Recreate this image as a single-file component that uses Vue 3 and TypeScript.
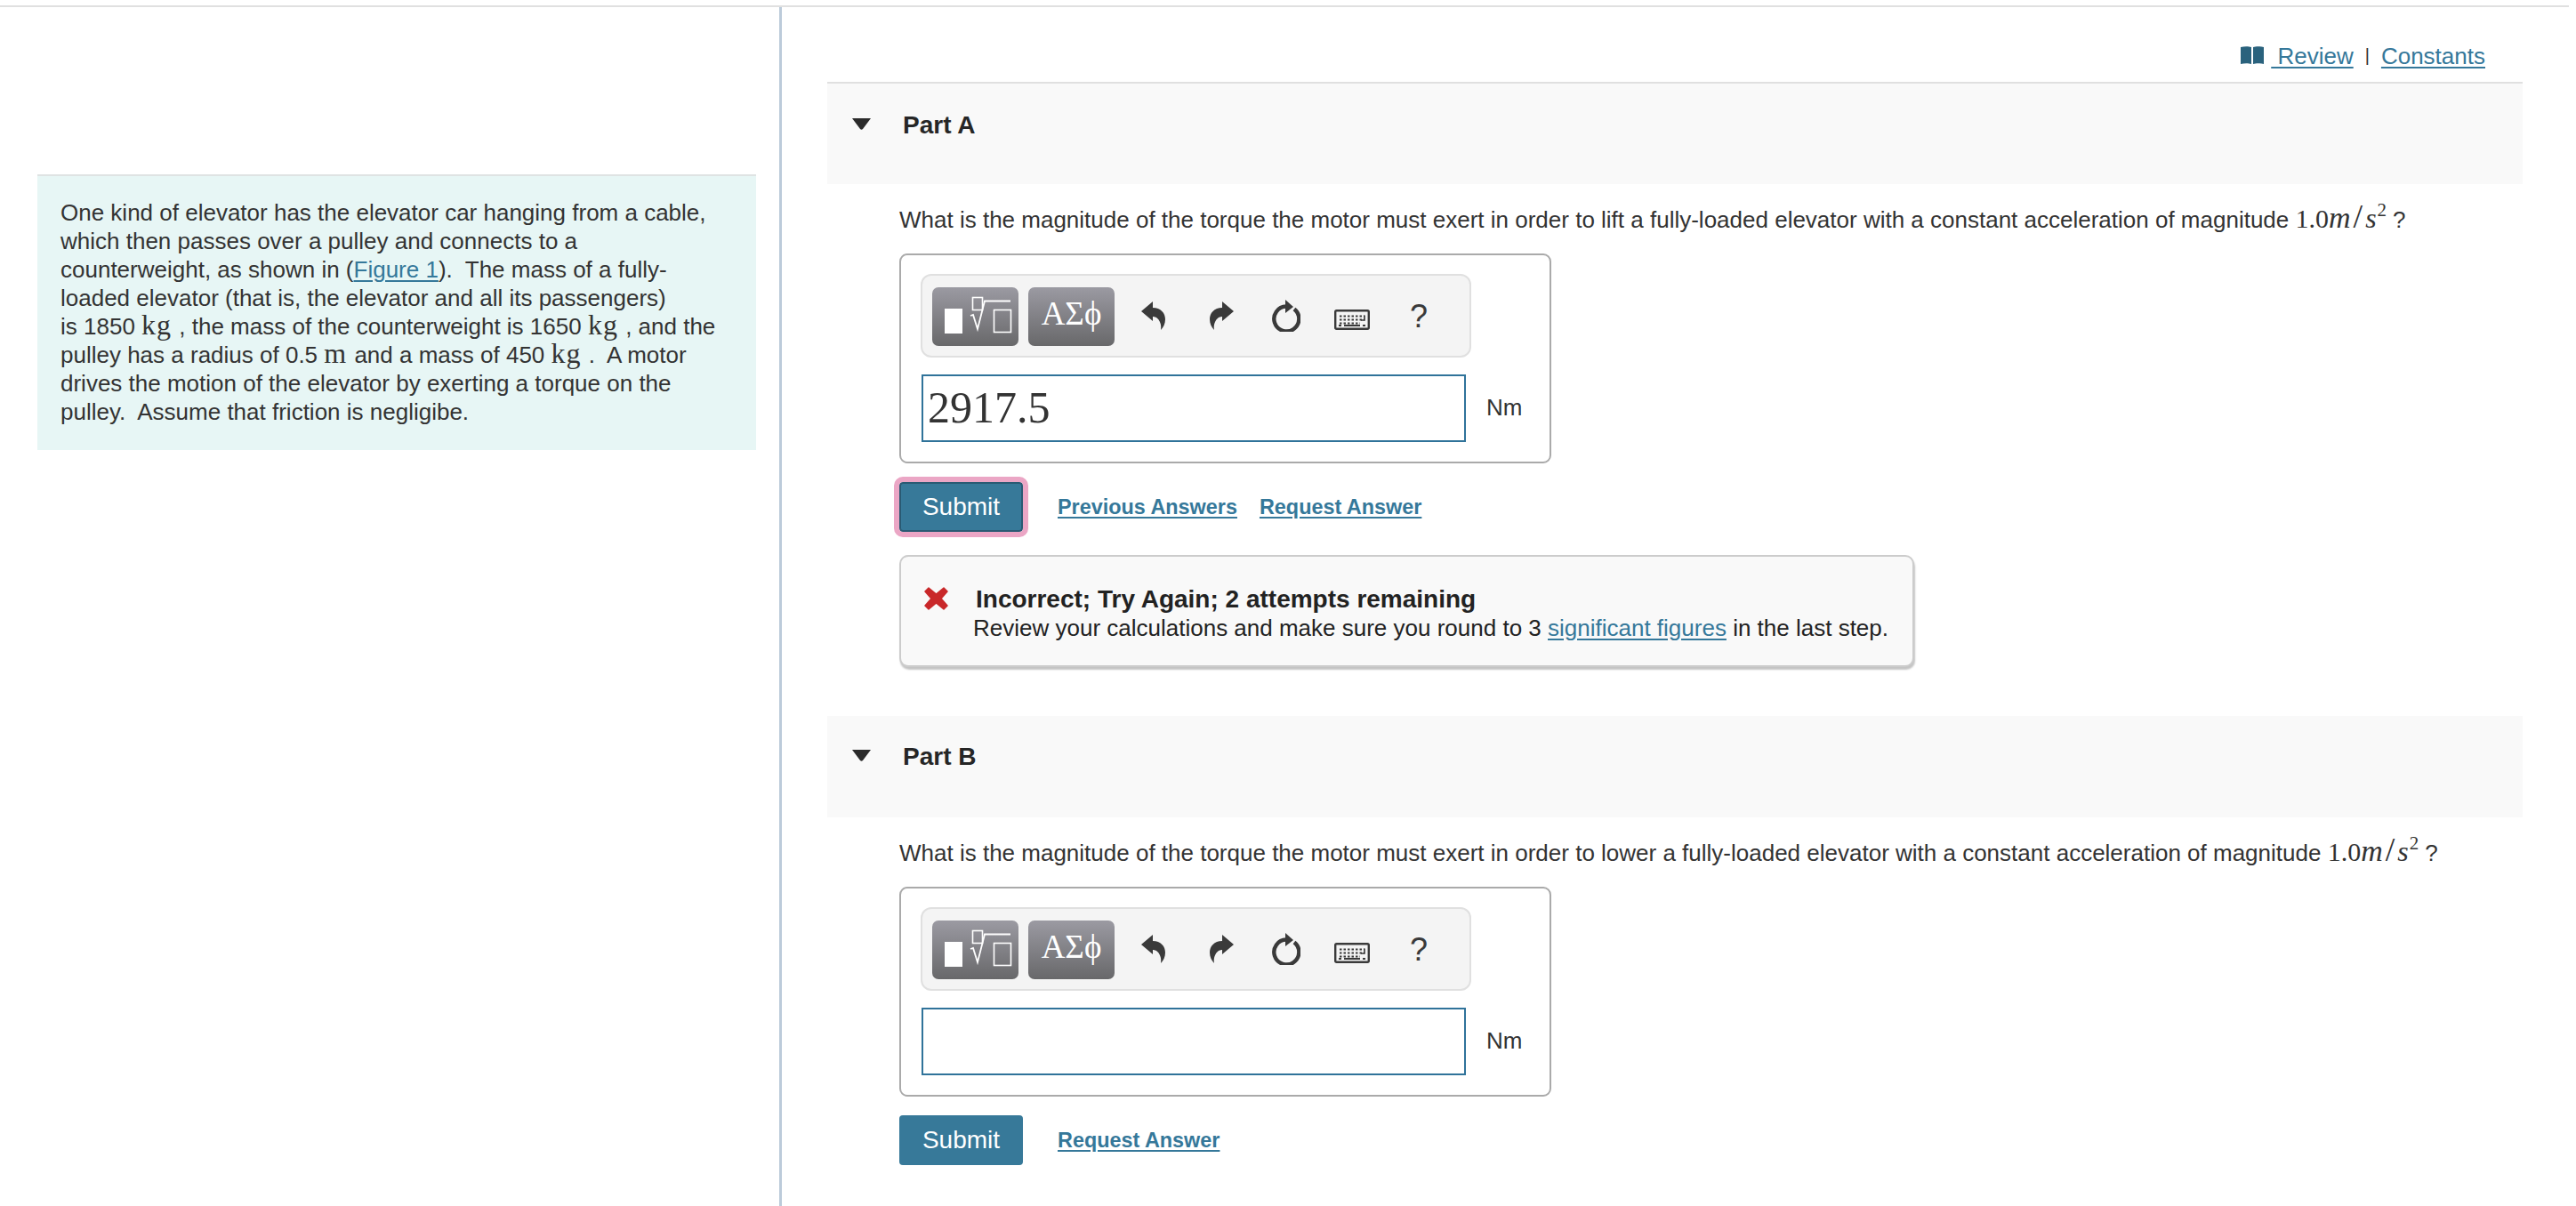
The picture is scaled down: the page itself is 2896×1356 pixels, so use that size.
<script setup lang="ts">
interface Part {
  id: string
  verb: string
  value: string
  focused: boolean
  previous: boolean
  feedback: boolean
}
const parts: Part[] = [
  { id: 'Part A', verb: 'lift', value: '2917.5', focused: true, previous: true, feedback: true },
  { id: 'Part B', verb: 'lower', value: '', focused: false, previous: false, feedback: false },
]
const keyRows = [
  { y: 7.5, dash: '2.5 2', x1: 6, x2: 34 },
  { y: 11.5, dash: '2.5 2', x1: 6, x2: 34 },
  { y: 15.5, dash: '2.5 2', x1: 6, x2: 29 },
]
</script>

<template>
  <div class="page">
    <div class="columns">
      <aside class="left">
        <div class="intro">
          One kind of elevator has the elevator car hanging from a cable,<br />
          which then passes over a pulley and connects to a<br />
          counterweight, as shown in (<a class="link">Figure 1</a>).&nbsp; The mass of a fully-<br />
          loaded elevator (that is, the elevator and all its passengers)<br />
          is 1850 <span class="unit">kg</span> , the mass of the counterweight is 1650 <span class="unit">kg</span> , and the<br />
          pulley has a radius of 0.5 <span class="unit">m</span> and a mass of 450 <span class="unit">kg</span> .&nbsp; A motor<br />
          drives the motion of the elevator by exerting a torque on the<br />
          pulley.&nbsp; Assume that friction is negligibe.
        </div>
      </aside>

      <main class="right">
        <div class="toplinks">
          <svg class="book" width="26" height="20" viewBox="0 0 26 20">
            <path d="M0 1 C4 0 9 0 12 1 V20 C9 19 4 19 0 20 Z" fill="#2a627d" />
            <path d="M26 1 C22 0 17 0 14 1 V20 C17 19 22 19 26 20 Z" fill="#2a627d" />
          </svg>
          <a class="link">&nbsp;Review</a>
          <span class="sep">|</span>
          <a class="link">Constants</a>
        </div>

        <section v-for="part in parts" :key="part.id" class="part" :class="{ first: part.previous }">
          <header class="part-head">
            <svg class="caret" width="21" height="13" viewBox="0 0 21 13">
              <path d="M0 0 H21 L12 12 Q10.5 13.5 9 12 Z" fill="#2b2b2b" />
            </svg>
            <h2 class="part-title">{{ part.id }}</h2>
          </header>

          <div class="part-body">
            <p class="question">
              What is the magnitude of the torque the motor must exert in order to {{ part.verb }} a fully-loaded elevator with a constant acceleration of magnitude
              <span class="math">1.0<i class="mi-m">m</i><span class="slash">/</span><i class="mi-s">s</i><sup>2</sup></span><span class="qm">?</span>
            </p>

            <div class="answer">
              <div class="toolbar">
                <div class="tool-btn">
                  <svg width="97" height="66" viewBox="0 0 97 66" fill="none">
                    <rect x="14" y="24" width="20" height="28" fill="#fff" />
                    <rect x="45.5" y="11.5" width="11" height="14" stroke="#fff" stroke-width="1.6" />
                    <path d="M43 32 L46 31 L51 47 L59 15.5 H88" stroke="#fff" stroke-width="1.8" />
                    <rect x="69.5" y="25.5" width="19" height="25" stroke="#fff" stroke-width="1.6" />
                  </svg>
                </div>
                <div class="tool-btn greek">ΑΣϕ</div>
                <svg class="ic undo" width="27" height="32" viewBox="0 0 27 32">
                  <path d="M0 11 L13 0 V7 C22 7 27 13 27 20 C27 25 25 29 22 32 C23 26 21 21 17 18 C15 17 14 17 13 17 V22 Z" fill="#3a3a3a" />
                </svg>
                <svg class="ic redo" width="27" height="32" viewBox="0 0 27 32">
                  <path d="M27 11 L14 0 V7 C5 7 0 13 0 20 C0 25 2 29 5 32 C4 26 6 21 10 18 C12 17 13 17 14 17 V22 Z" fill="#3a3a3a" />
                </svg>
                <svg class="ic reload" width="32" height="36" viewBox="0 0 32 36" fill="none">
                  <path d="M25 10.5 A14 14 0 1 1 16 7.5" stroke="#3a3a3a" stroke-width="4.4" />
                  <path d="M15 0 L24 8 L15 15 Z" fill="#3a3a3a" />
                </svg>
                <svg class="ic keyboard" width="40" height="23" viewBox="0 0 40 23" fill="none">
                  <rect x="1.2" y="1.2" width="37.6" height="20.6" rx="1.5" stroke="#3a3a3a" stroke-width="2.4" />
                  <line v-for="row in keyRows" :key="row.y" :x1="row.x1" :x2="row.x2" :y1="row.y" :y2="row.y" stroke="#3a3a3a" stroke-width="1.8" :stroke-dasharray="row.dash" />
                  <path d="M34 6.5 V12 H30" stroke="#3a3a3a" stroke-width="1.6" />
                  <line x1="11" x2="29" y1="18" y2="18" stroke="#3a3a3a" stroke-width="2" />
                  <line x1="5" x2="8" y1="18" y2="18" stroke="#3a3a3a" stroke-width="2" />
                  <line x1="32" x2="35" y1="18" y2="18" stroke="#3a3a3a" stroke-width="2" />
                </svg>
                <span class="help">?</span>
              </div>
              <div class="entry">
                <div class="field">{{ part.value }}</div>
                <span class="nm">Nm</span>
              </div>
            </div>

            <div class="actions">
              <button class="submit" :class="{ focused: part.focused }" type="button">Submit</button>
              <a v-if="part.previous" class="link strong">Previous Answers</a>
              <a class="link strong">Request Answer</a>
            </div>

            <div v-if="part.feedback" class="feedback">
              <svg class="cross" width="27" height="26" viewBox="0 0 27 26">
                <path d="M5 1 L13.5 8 L22 1 L26 5 L19 13 L26 21 L22 25 L13.5 18 L5 25 L1 21 L8 13 L1 5 Z" fill="#c9282a" stroke="#c9282a" stroke-width="1.5" stroke-linejoin="round" />
              </svg>
              <div class="fb-text">
                <div class="fb-title">Incorrect; Try Again; 2 attempts remaining</div>
                <div class="fb-msg">Review your calculations and make sure you round to 3 <a class="link">significant figures</a> in the last step.</div>
              </div>
            </div>
          </div>
        </section>
      </main>
    </div>
  </div>
</template>

<style scoped>
.page {
  width: 2896px;
  height: 1356px;
  overflow: hidden;
  padding-top: 6px;
  box-sizing: border-box;
  background: #fff;
  font-family: "Liberation Sans", Arial, sans-serif;
  font-size: 26px;
  line-height: 32px;
  color: #333;
}
.columns {
  display: flex;
  width: 2888px;
  height: 1350px;
  border-top: 2px solid #e0e0e0;
  box-sizing: border-box;
}
.left {
  width: 876px;
  flex: none;
  padding: 188px 0 0 42px;
  box-sizing: border-box;
}
.intro {
  width: 808px;
  height: 310px;
  box-sizing: border-box;
  padding: 25px 0 0 26px;
  background: #e7f6f5;
  border-top: 2px solid #dfe3e3;
  white-space: nowrap;
}
.unit {
  font-family: "Liberation Serif", serif;
  font-size: 32px;
  line-height: 0;
  letter-spacing: 1px;
  padding-right: 1px;
}
.link {
  color: #35789a;
  text-decoration: underline;
  text-underline-offset: 3px;
}
.right {
  flex: none;
  width: 2012px;
  border-left: 3px solid #bccbda;
  box-sizing: border-box;
  padding-left: 51px;
}
.toplinks {
  width: 1906px;
  height: 84px;
  box-sizing: border-box;
  padding: 39px 42px 0 0;
  display: flex;
  justify-content: flex-end;
  align-items: flex-start;
}
.book {
  margin: 5px 8px 0 0;
}
.sep {
  font-size: 20px;
  margin: 0 13px;
  position: relative;
  top: -1px;
}
.part {
  width: 1906px;
}
.part-head {
  display: flex;
  align-items: flex-start;
  height: 114px;
  box-sizing: border-box;
  padding: 30px 0 0 28px;
  background: #f9f9f9;
}
.first .part-head {
  height: 115px;
  border-top: 2px solid #e0e0e0;
  padding-top: 31px;
}
.caret {
  margin-top: 8px;
}
.part-title {
  margin: 0 0 0 36px;
  font-size: 28px;
  line-height: 32px;
  font-weight: 700;
  color: #262626;
}
.part-body {
  padding: 24px 0 0 81px;
}
.question {
  margin: 0;
  white-space: nowrap;
  height: 32px;
}
.math {
  font-family: "Liberation Serif", serif;
  font-size: 30px;
  line-height: 0;
}
.mi-m {
  font-size: 34px;
  letter-spacing: 3px;
}
.slash {
  font-size: 38px;
  letter-spacing: 3px;
}
.mi-s {
  font-size: 32px;
  letter-spacing: 1px;
}
.math sup {
  font-size: 21px;
  line-height: 0;
  vertical-align: 13px;
}
.qm {
  margin-left: 7px;
}
.answer {
  margin-top: 22px;
  width: 733px;
  height: 236px;
  box-sizing: border-box;
  border: 2px solid #aaa;
  border-radius: 9px;
  padding: 21px 0 0 22px;
}
.toolbar {
  position: relative;
  width: 619px;
  height: 94px;
  box-sizing: border-box;
  border: 2px solid #e0e0e0;
  border-radius: 12px;
  background: #f4f4f4;
  padding: 13px 0 0 11px;
  display: flex;
  gap: 11px;
}
.tool-btn {
  width: 97px;
  height: 66px;
  border-radius: 7px;
  background: linear-gradient(#9b9aa2, #68686a);
}
.tool-btn svg {
  display: block;
}
.greek {
  font-family: "Liberation Serif", serif;
  font-size: 37px;
  line-height: 60px;
  text-align: center;
  color: #fff;
}
.ic {
  position: absolute;
}
.undo {
  left: 246px;
  top: 29px;
}
.redo {
  left: 323px;
  top: 29px;
}
.reload {
  left: 393px;
  top: 27px;
}
.keyboard {
  left: 463px;
  top: 38px;
}
.help {
  position: absolute;
  left: 548px;
  top: 26px;
  font-size: 36px;
  line-height: 40px;
  color: #3a3a3a;
}
.entry {
  display: flex;
  align-items: center;
  margin-top: 19px;
}
.field {
  width: 612px;
  height: 76px;
  box-sizing: border-box;
  border: 2px solid #30739a;
  background: #fff;
  margin-left: 1px;
  padding-left: 5px;
  font-family: "Liberation Serif", serif;
  font-size: 50px;
  line-height: 70px;
  color: #333;
}
.nm {
  margin-left: 23px;
  position: relative;
  top: -1px;
}
.actions {
  display: flex;
  align-items: center;
  margin-top: 21px;
  height: 56px;
  gap: 25px;
}
.submit {
  width: 139px;
  height: 56px;
  margin-right: 14px;
  padding: 0;
  border: none;
  border-radius: 4px;
  background: #377999;
  color: #fff;
  font-family: "Liberation Sans", Arial, sans-serif;
  font-size: 28px;
}
.submit.focused {
  border: 2px solid #2a5a73;
  outline: 6px solid #eba6c5;
  outline-offset: 0;
}
.strong {
  font-size: 23.4px;
  font-weight: 700;
}
.feedback {
  display: flex;
  align-items: flex-start;
  width: 1141px;
  height: 126px;
  box-sizing: border-box;
  margin-top: 26px;
  padding: 31px 0 0 26px;
  border: 2px solid #ccc;
  border-radius: 10px;
  background: #f9f9f9;
  box-shadow: 1px 3px 2px #c4c4c4;
  margin-bottom: 55px;
}
.cross {
  flex: none;
  margin-top: 3px;
}
.fb-text {
  margin-left: 28px;
  white-space: nowrap;
  line-height: 33px;
  color: #222;
}
.fb-title {
  margin-left: 3px;
  font-size: 28px;
  font-weight: 700;
}
</style>
